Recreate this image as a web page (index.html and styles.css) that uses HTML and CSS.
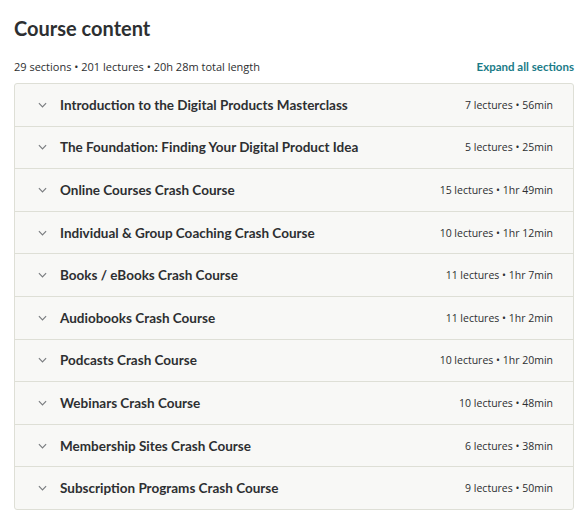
FILE: index.html
```html
<!DOCTYPE html>
<html lang="en">
<head>
    <meta charset="UTF-8">
    <title>Course content</title>
    <link rel="stylesheet" href="styles.css">
</head>
<body>
    <div class="container">
        <h2>Course content</h2>

        <div class="summary">
            <span>29 sections • 201 lectures • 20h 28m total length</span>
            <button class="expand-all">Expand all sections</button>
        </div>

        <div class="sections">
            <div class="section">
                <svg class="chevron" viewBox="0 0 10 6"><path d="M1 1l4 4 4-4"/></svg>
                <span class="section-title">Introduction to the Digital Products Masterclass</span>
                <span class="section-meta">7 lectures • 56min</span>
            </div>
            <div class="section">
                <svg class="chevron" viewBox="0 0 10 6"><path d="M1 1l4 4 4-4"/></svg>
                <span class="section-title">The Foundation: Finding Your Digital Product Idea</span>
                <span class="section-meta">5 lectures • 25min</span>
            </div>
            <div class="section">
                <svg class="chevron" viewBox="0 0 10 6"><path d="M1 1l4 4 4-4"/></svg>
                <span class="section-title">Online Courses Crash Course</span>
                <span class="section-meta">15 lectures • 1hr 49min</span>
            </div>
            <div class="section">
                <svg class="chevron" viewBox="0 0 10 6"><path d="M1 1l4 4 4-4"/></svg>
                <span class="section-title">Individual &amp; Group Coaching Crash Course</span>
                <span class="section-meta">10 lectures • 1hr 12min</span>
            </div>
            <div class="section">
                <svg class="chevron" viewBox="0 0 10 6"><path d="M1 1l4 4 4-4"/></svg>
                <span class="section-title">Books / eBooks Crash Course</span>
                <span class="section-meta">11 lectures • 1hr 7min</span>
            </div>
            <div class="section">
                <svg class="chevron" viewBox="0 0 10 6"><path d="M1 1l4 4 4-4"/></svg>
                <span class="section-title">Audiobooks Crash Course</span>
                <span class="section-meta">11 lectures • 1hr 2min</span>
            </div>
            <div class="section">
                <svg class="chevron" viewBox="0 0 10 6"><path d="M1 1l4 4 4-4"/></svg>
                <span class="section-title">Podcasts Crash Course</span>
                <span class="section-meta">10 lectures • 1hr 20min</span>
            </div>
            <div class="section">
                <svg class="chevron" viewBox="0 0 10 6"><path d="M1 1l4 4 4-4"/></svg>
                <span class="section-title">Webinars Crash Course</span>
                <span class="section-meta">10 lectures • 48min</span>
            </div>
            <div class="section">
                <svg class="chevron" viewBox="0 0 10 6"><path d="M1 1l4 4 4-4"/></svg>
                <span class="section-title">Membership Sites Crash Course</span>
                <span class="section-meta">6 lectures • 38min</span>
            </div>
            <div class="section">
                <svg class="chevron" viewBox="0 0 10 6"><path d="M1 1l4 4 4-4"/></svg>
                <span class="section-title">Subscription Programs Crash Course</span>
                <span class="section-meta">9 lectures • 50min</span>
            </div>
        </div>
    </div>
</body>
</html>
```

FILE: styles.css
```css
body {
    margin: 0;
    font-family: 'Open Sans', 'Noto Sans', sans-serif;
    color: #2d2f31;
    background: #fff;
}

.container {
    padding: 14px 9px 0 14px;
}

h2 {
    margin: 0;
    font-family: Lato, 'Open Sans', sans-serif;
    font-size: 20px;
    line-height: 28px;
    font-weight: 700;
    color: #2d2f31;
}

.summary {
    display: flex;
    justify-content: space-between;
    align-items: center;
    margin-top: 17px;
    height: 14px;
    font-size: 11px;
}

.expand-all {
    padding: 0;
    border: none;
    background: none;
    font-family: Lato, 'Open Sans', sans-serif;
    font-size: 11.5px;
    font-weight: 700;
    color: #1a7b87;
    cursor: pointer;
}

.sections {
    margin-top: 10px;
    border: 1px solid #dedfd6;
    border-radius: 3px;
    background: #f8f8f6;
}

.section {
    display: flex;
    align-items: center;
    height: 42.6px;
    box-sizing: border-box;
    padding: 0 20px 0 23px;
    border-top: 1px solid #dedfd6;
}

.section:first-child {
    border-top: none;
    height: 41.6px;
}

.chevron {
    width: 9px;
    height: 6px;
    fill: none;
    stroke: #7a7d80;
    stroke-width: 1.3;
    margin-right: 13px;
}

.section-title {
    flex: 1;
    font-family: Lato, 'Open Sans', sans-serif;
    font-size: 13.5px;
    font-weight: 700;
}

.section-meta {
    font-size: 10.5px;
}
```
